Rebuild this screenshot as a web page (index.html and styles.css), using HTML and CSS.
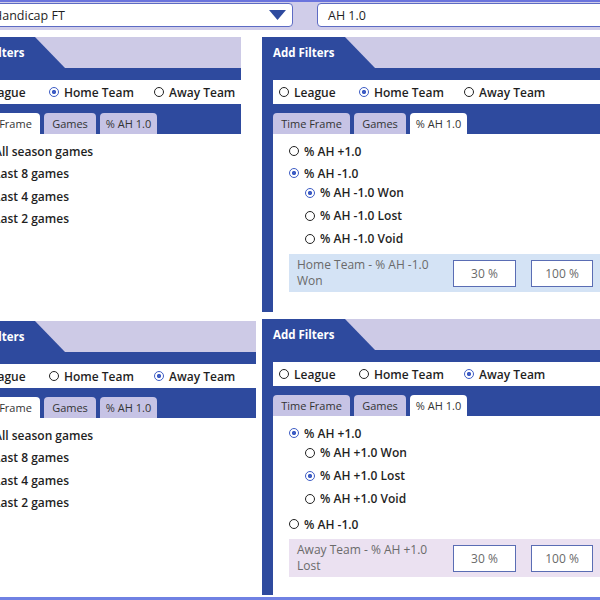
FILE: index.html
```html
<!DOCTYPE html>
<html>
<head>
<meta charset="utf-8">
<link rel="stylesheet" href="styles.css">
</head>
<body>
<div class="app">
  <div class="topbar">
    <div class="select">
      <span>Handicap FT</span>
      <svg class="caret" width="17" height="10" viewBox="0 0 17 10"><path d="M0 0H17L8.5 10Z" fill="#2e4a9e"/></svg>
    </div>
    <div class="field">AH 1.0</div>
  </div>

  <div class="grid">
    <!-- top left -->
    <section class="panel">
      <div class="ph"><div class="ph-tab">Add Filters</div></div>
      <div class="pb">
        <div class="scope">
          <span class="opt"><i class="rd"></i>League</span>
          <span class="opt"><i class="rd on"></i>Home Team</span>
          <span class="opt"><i class="rd"></i>Away Team</span>
        </div>
        <div class="tabs">
          <span class="tab t1 active">Time Frame</span>
          <span class="tab t2">Games</span>
          <span class="tab t3">% AH 1.0</span>
        </div>
        <div class="content">
          <div class="item tf"><i class="rd"></i>All season games</div>
          <div class="item tf"><i class="rd"></i>Last 8 games</div>
          <div class="item tf"><i class="rd"></i>Last 4 games</div>
          <div class="item tf"><i class="rd"></i>Last 2 games</div>
        </div>
      </div>
    </section>

    <!-- top right -->
    <section class="panel">
      <div class="ph"><div class="ph-tab">Add Filters</div></div>
      <div class="pb">
        <div class="scope">
          <span class="opt"><i class="rd"></i>League</span>
          <span class="opt"><i class="rd on"></i>Home Team</span>
          <span class="opt"><i class="rd"></i>Away Team</span>
        </div>
        <div class="tabs">
          <span class="tab t1">Time Frame</span>
          <span class="tab t2">Games</span>
          <span class="tab t3 active">% AH 1.0</span>
        </div>
        <div class="content">
          <div class="item"><i class="rd"></i>% AH +1.0</div>
          <div class="item"><i class="rd on"></i>% AH -1.0</div>
          <div class="sub">
            <div class="item"><i class="rd on"></i>% AH -1.0 Won</div>
            <div class="item"><i class="rd"></i>% AH -1.0 Lost</div>
            <div class="item"><i class="rd"></i>% AH -1.0 Void</div>
          </div>
          <div class="range">
            <div class="range-label">Home Team - % AH -1.0<br>Won</div>
            <div class="num">30 %</div>
            <div class="num num2">100 %</div>
          </div>
        </div>
      </div>
    </section>

    <!-- bottom left -->
    <section class="panel panel-wide">
      <div class="ph"><div class="ph-tab">Add Filters</div></div>
      <div class="pb">
        <div class="scope">
          <span class="opt"><i class="rd"></i>League</span>
          <span class="opt"><i class="rd"></i>Home Team</span>
          <span class="opt"><i class="rd on"></i>Away Team</span>
        </div>
        <div class="tabs">
          <span class="tab t1 active">Time Frame</span>
          <span class="tab t2">Games</span>
          <span class="tab t3">% AH 1.0</span>
        </div>
        <div class="content">
          <div class="item tf"><i class="rd"></i>All season games</div>
          <div class="item tf"><i class="rd"></i>Last 8 games</div>
          <div class="item tf"><i class="rd"></i>Last 4 games</div>
          <div class="item tf"><i class="rd"></i>Last 2 games</div>
        </div>
      </div>
    </section>

    <!-- bottom right -->
    <section class="panel">
      <div class="ph"><div class="ph-tab">Add Filters</div></div>
      <div class="pb">
        <div class="scope">
          <span class="opt"><i class="rd"></i>League</span>
          <span class="opt"><i class="rd"></i>Home Team</span>
          <span class="opt"><i class="rd on"></i>Away Team</span>
        </div>
        <div class="tabs">
          <span class="tab t1">Time Frame</span>
          <span class="tab t2">Games</span>
          <span class="tab t3 active">% AH 1.0</span>
        </div>
        <div class="content">
          <div class="item"><i class="rd on"></i>% AH +1.0</div>
          <div class="sub">
            <div class="item"><i class="rd"></i>% AH +1.0 Won</div>
            <div class="item"><i class="rd on"></i>% AH +1.0 Lost</div>
            <div class="item"><i class="rd"></i>% AH +1.0 Void</div>
          </div>
          <div class="item"><i class="rd"></i>% AH -1.0</div>
          <div class="range lilac">
            <div class="range-label">Away Team - % AH +1.0<br>Lost</div>
            <div class="num">30 %</div>
            <div class="num num2">100 %</div>
          </div>
        </div>
      </div>
    </section>
  </div>
</div>
</body>
</html>
```

FILE: styles.css
```css
* { box-sizing: border-box; }
html, body { margin: 0; padding: 0; }
body {
  font-family: "Open Sans", "Noto Sans", sans-serif;
  color: #1f1f1f;
  background: #fff;
}
.app {
  width: 600px;
  height: 600px;
  overflow: hidden;
  border-top: 2px solid #6b74dd;
  border-bottom: 3px solid #7081e3;
  display: flex;
  flex-direction: column;
}
.topbar {
  height: 28px;
  flex-shrink: 0;
  background: #d0cde9;
  display: flex;
  padding-top: 1px;
}
.select {
  margin-left: -60px;
  width: 353px;
  height: 24px;
  background: #fff;
  border: 1px solid #5d6bc4;
  border-radius: 4px;
  display: flex;
  align-items: center;
  justify-content: space-between;
  padding: 0 6px 0 52px;
  font-size: 12.5px;
  font-weight: 500;
}
.caret { display: block; }
.field {
  margin-left: 24px;
  margin-right: -20px;
  flex: 1;
  height: 24px;
  background: #fff;
  border: 1px solid #5d6bc4;
  border-radius: 4px;
  padding-left: 10px;
  display: flex;
  align-items: center;
  font-size: 12.5px;
  font-weight: 500;
}
.grid {
  margin-top: 7px;
  margin-left: -48px;
  width: 708px;
  flex: 1;
  display: grid;
  grid-template-columns: 289px 1fr;
  grid-template-rows: 275px 276px;
  column-gap: 21px;
  row-gap: 7px;
}
.panel {
  display: flex;
  flex-direction: column;
  background: #2e4a9e;
  min-width: 0;
}
.panel-wide {
  width: 304px;
  margin-top: 2px;
}
.ph {
  height: 31px;
  flex-shrink: 0;
  background: #cdcae6;
}
.ph-tab {
  width: 113px;
  height: 31px;
  background: #2e4a9e;
  clip-path: polygon(0 0, 83px 0, 113px 100%, 0 100%);
  color: #fff;
  font-weight: 700;
  font-size: 11.5px;
  line-height: 31px;
  padding-left: 11px;
  white-space: nowrap;
}
.pb {
  flex: 1;
  display: flex;
  flex-direction: column;
  padding: 12px 0 0 11px;
  min-height: 0;
}
.scope {
  height: 24px;
  flex-shrink: 0;
  background: #fff;
  display: flex;
  align-items: center;
  padding-left: 6px;
  font-size: 12px;
  font-weight: 600;
}
.opt {
  display: flex;
  align-items: center;
  gap: 5px;
  white-space: nowrap;
}
.scope .opt:nth-child(1) { width: 80px; }
.scope .opt:nth-child(2) { width: 105px; }
.rd {
  width: 10px;
  height: 10px;
  border: 1.5px solid #222;
  border-radius: 50%;
  flex-shrink: 0;
}
.rd.on {
  border-color: #3d5cc4;
  background: radial-gradient(circle, #3d5cc4 0 1.8px, transparent 2.4px);
}
.tabs {
  margin-top: 9px;
  height: 21px;
  flex-shrink: 0;
  display: flex;
  gap: 4px;
}
.tab {
  background: #c6c3e5;
  border-radius: 4px 4px 0 0;
  font-size: 11px;
  font-weight: 500;
  color: #333;
  display: flex;
  align-items: center;
  justify-content: center;
  white-space: nowrap;
}
.tab.active { background: #fff; font-weight: 400; }
.t1 { width: 77px; }
.t2 { width: 52px; }
.t3 { width: 57px; }
.content {
  flex: 1;
  background: #fff;
  padding-top: 6px;
}
.item {
  height: 22px;
  padding-left: 16px;
  display: flex;
  align-items: center;
  gap: 5px;
  font-size: 12px;
  font-weight: 600;
  white-space: nowrap;
}
.item.tf { height: 22.5px; }
.sub {
  margin: -3px 0 3px;
  padding-left: 16px;
}
.sub .item { height: 23px; }
.range {
  margin: 4px 0 0 16px;
  padding: 3px 0 3px 8px;
  display: flex;
  align-items: center;
  background: #d4e3f5;
}
.range.lilac { background: #ebe1f1; }
.range-label {
  width: 156px;
  font-size: 12px;
  line-height: 16px;
  color: #6a6a6a;
}
.num {
  width: 63px;
  height: 27px;
  background: #fff;
  border: 1px solid #5a6db4;
  display: flex;
  align-items: center;
  justify-content: center;
  font-size: 12px;
  color: #6a6a6a;
}
.num2 { width: 62px; margin-left: 15px; }
```
